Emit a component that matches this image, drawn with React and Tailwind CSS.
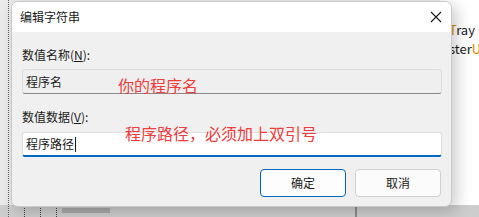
export default function App() {
  return (
    <div
      className="relative w-[479px] h-[217px] overflow-hidden bg-[#ebebeb]"
      style={{ fontFamily: '"Noto Sans CJK SC", "Noto Sans", sans-serif' }}
    >
      {/* background window on the right */}
      <div className="absolute left-[440px] top-0 w-[60px] h-[207px] bg-white">
        <div className="pt-[20px] pl-[9px] text-[13px] leading-[20px] text-[#1a1a1a]">
          <div>
            <span className="text-[#d88a00]">T</span>ray
          </div>
          <div className="mt-[-1px] whitespace-nowrap">
            ster<span className="text-[#d88a00]">U</span>
          </div>
        </div>
      </div>
      {/* bottom strip behind dialog */}
      <div className="absolute left-0 top-[205px] w-[479px] h-[12px] bg-[#cdcdcd]">
        <div className="absolute left-[62px] top-[3px] w-[48px] h-[5px] bg-[#a9a9a9]" />
        <div className="absolute left-[355px] top-0 w-[2px] h-[12px] bg-[#8d8d8d]" />
      </div>
      <div className="absolute left-[8px] top-0 h-[217px] border-l border-dotted border-[#666]" />
      <div className="absolute left-[24px] top-[205px] h-[12px] border-l border-dotted border-[#444]" />
      <div className="absolute left-[40px] top-[205px] h-[12px] border-l border-dotted border-[#444]" />
      <div className="absolute left-[56px] top-[205px] h-[12px] border-l border-dotted border-[#444]" />

      {/* dialog */}
      <div className="absolute left-[11px] top-[1px] w-[441px] h-[206px] rounded-[7px] border border-[#cacaca] bg-[#f0f0f0] overflow-hidden shadow-[4px_4px_16px_rgba(0,0,0,0.22)]">
        <div className="flex items-center justify-between h-[30px] bg-white pl-[8px] pr-[8px]">
          <span className="text-[12px] text-[#1a1a1a]">编辑字符串</span>
          <svg width="12" height="12" viewBox="0 0 12 12" className="mr-[1px]">
            <path d="M1 1 L11 11 M11 1 L1 11" stroke="#1a1a1a" strokeWidth="1.1" />
          </svg>
        </div>
        <div className="px-[10px] pt-[14px]">
          <div className="text-[12px] leading-[18px] text-[#1a1a1a]">
            数值名称(<span className="underline">N</span>):
          </div>
          <div className="mt-[5px] h-[25px] w-[420px] border border-[#dcdcdc] border-b-[#8a8a8a] rounded-[3px] bg-[#efefef] px-[3px] flex items-center text-[12px] text-[#1a1a1a]">
            程序名
          </div>
          <div className="mt-[14px] text-[12px] leading-[18px] text-[#1a1a1a]">
            数值数据(<span className="underline">V</span>):
          </div>
          <div className="mt-[6px] h-[25px] w-[420px] border border-[#e0e0e0] border-b-2 border-b-[#0067c0] rounded-[3px] bg-white px-[3px] flex items-center text-[12px] text-[#1a1a1a]">
            程序路径
            <span className="ml-[1px] w-[1px] h-[15px] bg-[#1a1a1a]" />
          </div>
          <div className="mt-[12px] flex justify-end gap-[9px]">
            <button className="w-[86px] h-[28px] rounded-[4px] border border-[#0067c0] bg-[#fdfdfd] text-[12px] text-[#1a1a1a]">
              确定
            </button>
            <button className="w-[86px] h-[28px] rounded-[4px] border border-[#d0d0d0] bg-[#fbfbfb] text-[12px] text-[#1a1a1a]">
              取消
            </button>
          </div>
        </div>
        <div className="absolute left-[106px] top-[73px] text-[16px] leading-[20px] text-[#f23b3b]">
          你的程序名
        </div>
        <div className="absolute left-[113px] top-[121px] text-[16px] leading-[20px] text-[#f23b3b]">
          程序路径，必须加上双引号
        </div>
      </div>
    </div>
  );
}
